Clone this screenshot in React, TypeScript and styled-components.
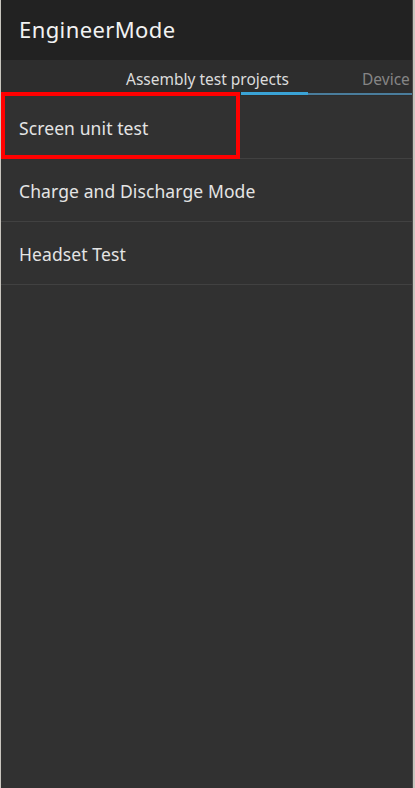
import React from 'react'
import styled, { createGlobalStyle } from 'styled-components'

const GlobalStyle = createGlobalStyle`
	html, body {
		margin: 0;
		padding: 0;
		background: #c8c5be;
	}
	body {
		font-family: 'Noto Sans', Roboto, sans-serif;
	}
`

const items = ['Screen unit test', 'Charge and Discharge Mode', 'Headset Test']

const App: React.FC = () => {
	return (
		<>
			<GlobalStyle />
			<Screen>
				<AppBar>
					<Title>EngineerMode</Title>
				</AppBar>
				<TabBar>
					<Tab active>Assembly test projects</Tab>
					<Tab>Device</Tab>
					<TabTrack>
						<TabIndicator />
					</TabTrack>
				</TabBar>
				<List>
					{items.map((label, i) => (
						<Row key={label}>
							<RowLabel>{label}</RowLabel>
							{i === 0 && <Highlight />}
						</Row>
					))}
				</List>
			</Screen>
		</>
	)
}

export default App

const Screen = styled.div`
	margin-left: 1px;
	width: 411px;
	height: 788px;
	background: #313131;
	display: flex;
	flex-direction: column;
	overflow: hidden;
	border-right: 1px solid #4a4a4a;
`

const AppBar = styled.div`
	height: 60px;
	background: #222222;
	display: flex;
	align-items: center;
	padding-left: 18px;
	box-sizing: border-box;
`

const Title = styled.div`
	color: #f2f2f2;
	font-size: 22px;
	letter-spacing: 0.4px;
	margin-top: -3px;
`

const TabBar = styled.div`
	position: relative;
	height: 36px;
	background: #2d2d2d;
	display: flex;
	align-items: center;
	padding-left: 125px;
	gap: 73px;
	white-space: nowrap;
`

const Tab = styled.div<{ active?: boolean }>`
	font-size: 15.5px;
	color: ${(p) => (p.active ? '#dcdcdc' : '#858585')};
	margin-top: 1px;
`

const TabTrack = styled.div`
	position: absolute;
	left: 240px;
	right: 0;
	bottom: 1px;
	height: 3px;
	display: flex;
	align-items: center;
	&::after {
		content: '';
		flex: 1;
		height: 2px;
		background: #4a7d9c;
	}
`

const TabIndicator = styled.div`
	width: 67px;
	height: 3px;
	background: #3aa3d6;
`

const List = styled.div`
	display: flex;
	flex-direction: column;
`

const Row = styled.div`
	position: relative;
	height: 62px;
	display: flex;
	align-items: center;
	padding-left: 18px;
	border-bottom: 1px solid #414141;
`

const RowLabel = styled.div`
	color: #e4e4e4;
	font-size: 17.5px;
	letter-spacing: 0.1px;
	margin-top: 1px;
`

const Highlight = styled.div`
	position: absolute;
	left: 0;
	top: -4px;
	width: 239px;
	height: 67px;
	border: 4px solid #ff0000;
	box-sizing: border-box;
`
